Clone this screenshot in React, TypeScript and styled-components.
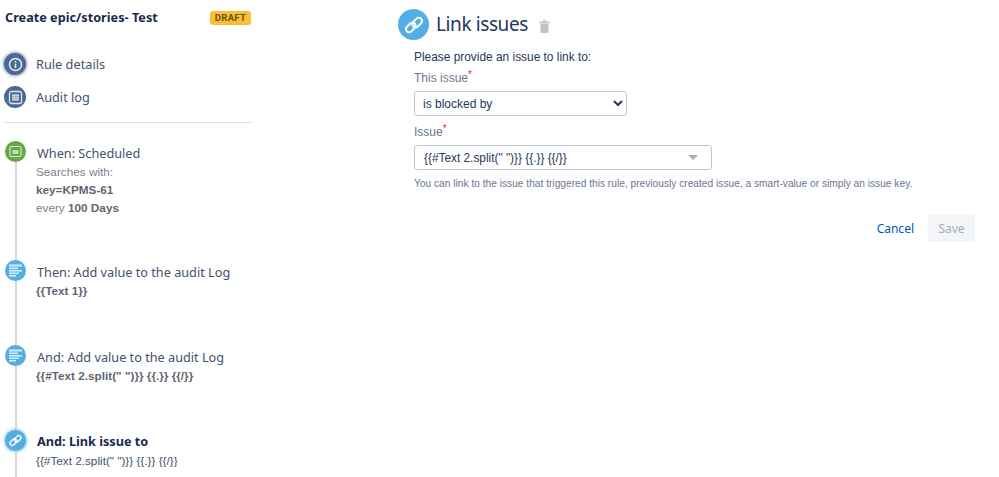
import React from "react";
import styled, { createGlobalStyle } from "styled-components";

const Global = createGlobalStyle`
  html, body { margin: 0; padding: 0; background: #fff; }
  body { width: 999px; height: 477px; overflow: hidden; font-family: "Liberation Sans", Arial, sans-serif; }
`;

const Page = styled.div`
  display: flex;
  width: 999px;
  height: 477px;
  overflow: hidden;
`;

const Sidebar = styled.aside`
  width: 246px;
  margin-left: 5px;
  margin-right: 1px;
  flex: none;
  display: flex;
  flex-direction: column;
`;

const RuleHeader = styled.div`
  display: flex;
  align-items: center;
  justify-content: space-between;
  height: 18px;
  margin-top: 9px;
`;

const RuleTitle = styled.h1`
  margin: 0;
  padding-bottom: 2px;
  font: 700 12.7px/18px "Noto Sans", sans-serif;
  color: #172b4d;
`;

const Lozenge = styled.span`
  background: #f9c034;
  color: #6b5416;
  border-radius: 3px;
  width: 41px;
  height: 14px;
  text-align: center;
  font: 700 9.5px/14px Roboto, sans-serif;
  letter-spacing: 0.3px;
`;

const Nav = styled.nav`
  display: flex;
  flex-direction: column;
  gap: 11px;
  margin-top: 26px;
  padding-bottom: 14px;
  border-bottom: 1px solid #dcdee0;
`;

const NavItem = styled.div`
  display: flex;
  align-items: center;
  gap: 10px;
  height: 22px;
  margin-left: -1px;
  font: 400 12.75px/22px "Noto Sans", sans-serif;
  color: #42526e;
`;

const Round = styled.span<{ $size: number; $bg: string; $glow?: boolean }>`
  width: ${(p) => p.$size}px;
  height: ${(p) => p.$size}px;
  flex: none;
  border-radius: 50%;
  background: ${(p) => p.$bg};
  display: flex;
  align-items: center;
  justify-content: center;
  box-shadow: ${(p) => (p.$glow ? `0 0 3px 1px ${p.$bg}99` : "none")};
`;

const Timeline = styled.div`
  display: flex;
  flex-direction: column;
  margin-top: 18px;
`;

const Step = styled.div<{ $h: number }>`
  display: grid;
  grid-template-columns: 21px 1fr;
  column-gap: 10px;
  height: ${(p) => p.$h}px;
`;

const Rail = styled.div`
  display: flex;
  flex-direction: column;
  align-items: center;
`;

const RailLine = styled.div`
  flex: 1;
  width: 2px;
  background: #d5d7da;
`;

const StepBody = styled.div`
  display: flex;
  flex-direction: column;
  min-width: 0;
`;

const StepTitle = styled.div<{ $bold?: boolean }>`
  margin-left: 1px;
  padding-top: ${(p) => (p.$bold ? 0 : 1)}px;
  margin-bottom: ${(p) => (p.$bold ? 0 : -1)}px;
  font: ${(p) => (p.$bold ? 700 : 400)} 12.7px/22px "Noto Sans", sans-serif;
  color: ${(p) => (p.$bold ? "#172b4d" : "#42526e")};
  white-space: nowrap;
`;

const StepText = styled.div<{ $dark?: boolean }>`
  font: 400 11.75px/18px "Liberation Sans", Arial, sans-serif;
  color: ${(p) => (p.$dark ? "#42526e" : "#7a8290")};
  white-space: nowrap;
  b { color: #5f6670; font-weight: 700; }
`;

const Main = styled.main`
  flex: 1;
  padding: 9px 24px 0 146px;
  display: flex;
  flex-direction: column;
`;

const Heading = styled.div`
  display: flex;
  align-items: center;
  height: 31px;
`;

const HeadingTitle = styled.h2`
  margin: 0 0 0 7px;
  font: 400 19px/31px "Noto Sans", sans-serif;
  letter-spacing: -0.4px;
  color: #253858;
`;

const Trash = styled.svg`
  margin: 3px 0 0 11px;
`;

const Form = styled.form`
  display: flex;
  flex-direction: column;
  margin: 9px 0 0 16px;
`;

const Intro = styled.p`
  margin: 0;
  font: 400 11.9px/16px "Liberation Sans", Arial, sans-serif;
  color: #253858;
`;

const Label = styled.label`
  display: block;
  margin-top: 5px;
  font: 400 12px/16px "Liberation Sans", Arial, sans-serif;
  color: #6b778c;
  height: 21px;
  sup {
    color: #de350b;
    font-size: 10px;
    line-height: 0;
    vertical-align: 4px;
  }
`;

const NativeSelect = styled.select`
  display: block;
  width: 213px;
  height: 25px;
  box-sizing: border-box;
  padding: 0 4px;
  border: 1px solid #c1c7d0;
  border-radius: 3px;
  background: #fff;
  color: #253858;
  font: 400 12px "Liberation Sans", Arial, sans-serif;
  margin-bottom: 3px;
`;

const Combo = styled.div`
  display: flex;
  align-items: center;
  justify-content: space-between;
  width: 298px;
  height: 25px;
  box-sizing: border-box;
  padding: 0 13px 0 9px;
  border: 1px solid #c1c7d0;
  border-radius: 3px;
  font: 400 11.85px "Liberation Sans", Arial, sans-serif;
  color: #253858;
`;

const Caret = styled.span`
  width: 0;
  height: 0;
  border-left: 5px solid transparent;
  border-right: 5px solid transparent;
  border-top: 5px solid #a5adba;
`;

const Help = styled.p`
  margin: 7px 0 0;
  font: 400 10.2px/13px "Liberation Sans", Arial, sans-serif;
  color: #6b778c;
  white-space: nowrap;
`;

const Actions = styled.div`
  display: flex;
  justify-content: flex-end;
  align-items: center;
  gap: 14px;
  margin-top: 25px;
`;

const CancelLink = styled.a`
  font: 400 12px/27px "Noto Sans", sans-serif;
  color: #0052cc;
`;

const SaveButton = styled.button`
  width: 47px;
  height: 27px;
  padding: 0;
  border: 0;
  border-radius: 3px;
  background: #f4f5f7;
  color: #a5adba;
  font: 400 12px "Noto Sans", sans-serif;
`;

const LinkGlyph = ({ size }: { size: number }) => (
  <svg width={size} height={size} viewBox="0 0 24 24" fill="none" stroke="#fff" strokeWidth="2.2">
    <rect x="2.5" y="11.2" width="12" height="7" rx="3.5" transform="rotate(-45 8.5 14.7)" />
    <rect x="9.5" y="5.8" width="12" height="7" rx="3.5" transform="rotate(-45 15.5 9.3)" />
  </svg>
);

const ListGlyph = () => (
  <svg width="15" height="15" viewBox="0 0 15 15" fill="#d6ebf8">
    <rect x="1" y="1.5" width="13" height="2" />
    <rect x="1" y="4.5" width="9" height="1.6" />
    <rect x="1" y="7" width="13" height="1.6" />
    <rect x="1" y="9.5" width="10" height="1.6" />
    <rect x="1" y="12" width="7" height="1.6" />
  </svg>
);

const CalendarGlyph = () => (
  <svg width="13" height="13" viewBox="0 0 13 13" fill="none">
    <rect x="1" y="1.5" width="11" height="10" rx="1.5" stroke="#d5e8cf" strokeWidth="1.2" />
    <rect x="3.5" y="5" width="6" height="4" fill="#d5e8cf" opacity=".8" />
  </svg>
);

const InfoGlyph = () => (
  <svg width="15" height="15" viewBox="0 0 15 15" fill="none">
    <circle cx="7.5" cy="7.5" r="6" stroke="#e8edf2" strokeWidth="1.5" />
    <rect x="6.7" y="6.6" width="1.6" height="4.4" fill="#e8edf2" />
    <rect x="6.7" y="4" width="1.6" height="1.6" fill="#e8edf2" />
  </svg>
);

const AuditGlyph = () => (
  <svg width="15" height="15" viewBox="0 0 15 15" fill="none">
    <rect x="1.5" y="1.5" width="12" height="12" rx="2" stroke="#dfe5ec" strokeWidth="1.3" />
    <rect x="4" y="4" width="7" height="7" fill="#9fb0c4" />
    <path d="M4 5.5h7M4 7.5h7M4 9.5h7" stroke="#dfe5ec" strokeWidth=".7" />
  </svg>
);

export default function App() {
  return (
    <Page>
      <Global />
      <Sidebar>
        <RuleHeader>
          <RuleTitle>Create epic/stories- Test</RuleTitle>
          <Lozenge>DRAFT</Lozenge>
        </RuleHeader>
        <Nav>
          <NavItem>
            <Round $size={22} $bg="#4a6a8f" $glow>
              <InfoGlyph />
            </Round>
            Rule details
          </NavItem>
          <NavItem>
            <Round $size={22} $bg="#4a6a8f">
              <AuditGlyph />
            </Round>
            Audit log
          </NavItem>
        </Nav>
        <Timeline>
          <Step $h={119}>
            <Rail>
              <Round $size={21} $bg="#64a845">
                <CalendarGlyph />
              </Round>
              <RailLine />
            </Rail>
            <StepBody>
              <StepTitle>When: Scheduled</StepTitle>
              <StepText>Searches with:</StepText>
              <StepText><b>key=KPMS-61</b></StepText>
              <StepText>every <b>100 Days</b></StepText>
            </StepBody>
          </Step>
          <Step $h={85}>
            <Rail>
              <Round $size={21} $bg="#52aee3">
                <ListGlyph />
              </Round>
              <RailLine />
            </Rail>
            <StepBody>
              <StepTitle>Then: Add value to the audit Log</StepTitle>
              <StepText><b>{"{{Text 1}}"}</b></StepText>
            </StepBody>
          </Step>
          <Step $h={85}>
            <Rail>
              <Round $size={21} $bg="#52aee3">
                <ListGlyph />
              </Round>
              <RailLine />
            </Rail>
            <StepBody>
              <StepTitle>And: Add value to the audit Log</StepTitle>
              <StepText><b>{'{{#Text 2.split(" ")}} {{.}} {{/}}'}</b></StepText>
            </StepBody>
          </Step>
          <Step $h={60}>
            <Rail>
              <Round $size={21} $bg="#52aee3" $glow>
                <LinkGlyph size={15} />
              </Round>
              <RailLine />
            </Rail>
            <StepBody>
              <StepTitle $bold>And: Link issue to</StepTitle>
              <StepText $dark>{'{{#Text 2.split(" ")}} {{.}} {{/}}'}</StepText>
            </StepBody>
          </Step>
        </Timeline>
      </Sidebar>
      <Main>
        <Heading>
          <Round $size={31} $bg="#52aee3">
            <LinkGlyph size={22} />
          </Round>
          <HeadingTitle>Link issues</HeadingTitle>
          <Trash width="11" height="13" viewBox="0 0 11 13" fill="#bfc3c9">
            <rect x="4" y="0" width="3" height="1.5" />
            <rect x="0.5" y="1.5" width="10" height="2" />
            <rect x="1.5" y="4" width="8" height="9" rx="1" />
          </Trash>
        </Heading>
        <Form>
          <Intro>Please provide an issue to link to:</Intro>
          <Label>This issue<sup>*</sup></Label>
          <NativeSelect defaultValue="is blocked by">
            <option>is blocked by</option>
            <option>blocks</option>
            <option>relates to</option>
          </NativeSelect>
          <Label>Issue<sup>*</sup></Label>
          <Combo>
            {'{{#Text 2.split(" ")}} {{.}} {{/}}'}
            <Caret />
          </Combo>
          <Help>You can link to the issue that triggered this rule, previously created issue, a smart-value or simply an issue key.</Help>
          <Actions>
            <CancelLink>Cancel</CancelLink>
            <SaveButton type="button" disabled>Save</SaveButton>
          </Actions>
        </Form>
      </Main>
    </Page>
  );
}
